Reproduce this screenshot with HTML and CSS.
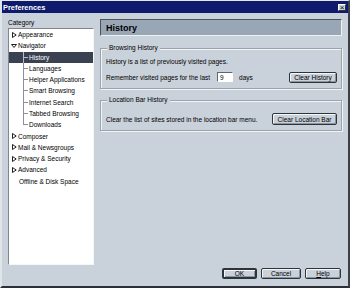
FILE: index.html
```html
<!DOCTYPE html>
<html lang="en">
<head>
    <meta charset="UTF-8">
    <meta name="viewport" content="width=device-width, initial-scale=1.0">
    <title>Preferences</title>
    <link rel="stylesheet" href="styles.css">
</head>
<body>
    <div class="window">
        <div class="titlebar">
            <span class="title">Preferences</span>
            <span class="close">&times;</span>
        </div>

        <div class="panes">
            <div class="sidebar">
                <div class="category-label">Category</div>
                <div class="tree">
                    <div class="row"><span class="twisty"><svg width="5" height="6" viewBox="0 0 5 6"><path d="M0.5 0.5 L4.2 3 L0.5 5.5 Z" fill="none" stroke="#222" stroke-width="1"/></svg></span><span>Appearance</span></div>
                    <div class="row"><span class="twisty open"><svg width="6" height="4" viewBox="0 0 6 4"><path d="M0.5 0.5 H5.5 L3 3.5 Z" fill="none" stroke="#222" stroke-width="1"/></svg></span><span>Navigator</span></div>
                    <div class="row child selected"><span class="branch"></span><span>History</span></div>
                    <div class="row child"><span class="branch"></span><span>Languages</span></div>
                    <div class="row child"><span class="branch"></span><span>Helper Applications</span></div>
                    <div class="row child"><span class="branch"></span><span>Smart Browsing</span></div>
                    <div class="row child"><span class="branch"></span><span>Internet Search</span></div>
                    <div class="row child"><span class="branch"></span><span>Tabbed Browsing</span></div>
                    <div class="row child"><span class="branch last"></span><span>Downloads</span></div>
                    <div class="row"><span class="twisty"><svg width="5" height="6" viewBox="0 0 5 6"><path d="M0.5 0.5 L4.2 3 L0.5 5.5 Z" fill="none" stroke="#222" stroke-width="1"/></svg></span><span>Composer</span></div>
                    <div class="row"><span class="twisty"><svg width="5" height="6" viewBox="0 0 5 6"><path d="M0.5 0.5 L4.2 3 L0.5 5.5 Z" fill="none" stroke="#222" stroke-width="1"/></svg></span><span>Mail &amp; Newsgroups</span></div>
                    <div class="row"><span class="twisty"><svg width="5" height="6" viewBox="0 0 5 6"><path d="M0.5 0.5 L4.2 3 L0.5 5.5 Z" fill="none" stroke="#222" stroke-width="1"/></svg></span><span>Privacy &amp; Security</span></div>
                    <div class="row"><span class="twisty"><svg width="5" height="6" viewBox="0 0 5 6"><path d="M0.5 0.5 L4.2 3 L0.5 5.5 Z" fill="none" stroke="#222" stroke-width="1"/></svg></span><span>Advanced</span></div>
                    <div class="row leaf"><span>Offline &amp; Disk Space</span></div>
                </div>
            </div>

            <div class="main">
                <div class="heading">History</div>

                <div class="group first">
                    <span class="group-title">Browsing History</span>
                    <div class="line">History is a list of previously visited pages.</div>
                    <div class="days-row">
                        <span>Remember visited pages for the last</span>
                        <input class="days" type="text" value="9">
                        <span class="days-label">days</span>
                        <button class="btn clear-history">Clear History</button>
                    </div>
                </div>

                <div class="group second">
                    <span class="group-title">Location Bar History</span>
                    <div class="location-row">
                        <span>Clear the list of sites stored in the location bar menu.</span>
                        <button class="btn clear-location">Clear Location Bar</button>
                    </div>
                </div>
            </div>
        </div>

        <div class="buttons">
            <button class="btn ok">OK</button>
            <button class="btn cancel">Cancel</button>
            <button class="btn help"><u>H</u>elp</button>
        </div>
    </div>
</body>
</html>
```

FILE: styles.css
```css
body {
    margin: 0;
    font-family: "Liberation Sans", Arial, sans-serif;
    font-size: 6.5px;
    color: #000;
}
.window {
    box-sizing: border-box;
    width: 350px;
    height: 288px;
    display: flex;
    flex-direction: column;
    background: #c9d1da;
    border-top: 1px solid #e4e8ec;
    border-left: 2px solid #e0e5ea;
    border-right: 2px solid #3c4048;
    border-bottom: 2px solid #2c3036;
}
.titlebar {
    height: 12px;
    flex-shrink: 0;
    background: #0e1a6c;
    display: flex;
    align-items: center;
    justify-content: space-between;
    padding: 0 2px 0 1px;
}
.title {
    color: #fff;
    font-weight: bold;
    font-size: 7.4px;
}
.close {
    box-sizing: border-box;
    width: 8px;
    height: 7px;
    background: #c9d1da;
    border: 1px solid;
    border-color: #fff #333 #333 #fff;
    font-size: 8px;
    line-height: 5px;
    text-align: center;
}
.panes {
    flex: 1;
    min-height: 0;
    display: flex;
    padding: 6px 6px 0 6px;
}
.sidebar {
    width: 86px;
    display: flex;
    flex-direction: column;
    margin-top: -1px;
}
.category-label {
    height: 10px;
    line-height: 10px;
}
.tree {
    flex: 1;
    background: #fff;
    border: 1px solid;
    border-color: #80868e #f4f6f8 #f4f6f8 #80868e;
}
.row {
    height: 11.28px;
    display: flex;
    align-items: center;
    padding-left: 3px;
    white-space: nowrap;
}
.row.selected {
    background: #3a4252;
    color: #fff;
}
.twisty {
    width: 6px;
    display: flex;
}
.twisty.open {
    margin-left: -1px;
    width: 7px;
}
.leaf {
    padding-left: 10px;
}
.child {
    padding-left: 14px;
}
.branch {
    width: 5px;
    height: 100%;
    margin-right: 1px;
    background:
        linear-gradient(#8a9199, #8a9199) 0 0 / 1px 100% no-repeat,
        linear-gradient(#8a9199, #8a9199) 0 50% / 100% 1px no-repeat;
}
.branch.last {
    background-size: 1px 50%, 100% 1px;
}
.selected .branch {
    background:
        linear-gradient(#b8bec6, #b8bec6) 0 0 / 1px 100% no-repeat,
        linear-gradient(#b8bec6, #b8bec6) 0 50% / 100% 1px no-repeat;
}
.main {
    flex: 1;
    margin-left: 6px;
    display: flex;
    flex-direction: column;
}
.heading {
    box-sizing: border-box;
    height: 17px;
    background: #98a6b6;
    border: 1px solid;
    border-color: #4c535c #eef1f4 #eef1f4 #4c535c;
    font-size: 9px;
    font-weight: bold;
    padding-left: 5px;
    display: flex;
    align-items: center;
}
.group {
    display: flex;
    flex-direction: column;
    border: 1px solid #9aa2ac;
    box-shadow: inset 1px 1px 0 #f2f4f6, 1px 1px 0 #f2f4f6;
    padding: 0 4px 5px 5px;
}
.group.first {
    margin-top: 12px;
}
.group.second {
    margin-top: 11px;
    padding-bottom: 5px;
}
.group-title {
    align-self: flex-start;
    margin: -5px 0 0 1px;
    padding: 0 2px;
    line-height: 8px;
    background: #c9d1da;
}
.line {
    margin-top: 5px;
    line-height: 10px;
}
.days-row, .location-row {
    display: flex;
    align-items: center;
    height: 12px;
}
.days-row {
    margin-top: 4px;
}
.location-row {
    margin-top: 9px;
}
.days {
    box-sizing: border-box;
    width: 16px;
    height: 10px;
    margin-left: 7px;
    padding: 0 2px;
    border: 1px solid;
    border-color: #60666e #fff #fff #60666e;
    background: #fff;
    font-family: inherit;
    font-size: 6.5px;
}
.days-label {
    margin-left: 6px;
}
.btn {
    box-sizing: border-box;
    height: 12px;
    padding: 0;
    font-family: inherit;
    font-size: 6.5px;
    color: #000;
    background: #c9d1da;
    border: 1px solid #2e343c;
    border-radius: 2px;
    box-shadow: inset 1px 1px 0 #f4f6f8, inset -1px -1px 0 #8c949c;
}
.clear-history {
    margin-left: auto;
    width: 48px;
    height: 11px;
}
.clear-location {
    margin-left: auto;
    width: 65px;
}
.buttons {
    display: flex;
    justify-content: flex-end;
    gap: 4px;
    padding: 3px 7px 7px 0;
}
.buttons .btn {
    height: 11px;
}
.ok {
    width: 35px;
    border-width: 2px;
}
.cancel {
    width: 40px;
}
.help {
    width: 36px;
}
```
